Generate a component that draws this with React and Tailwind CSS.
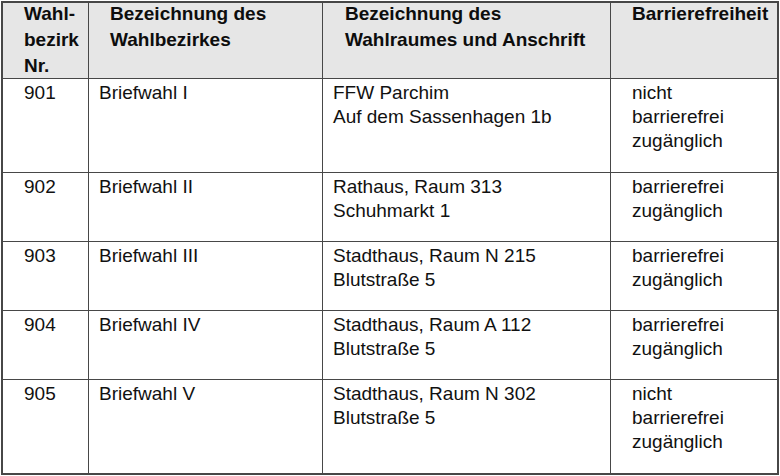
import React from 'react'

const rows = [
  { nr: '901', name: 'Briefwahl I', place: ['FFW Parchim', 'Auf dem Sassenhagen 1b'], access: ['nicht', 'barrierefrei', 'zugänglich'], h: 'h-[93px]' },
  { nr: '902', name: 'Briefwahl II', place: ['Rathaus, Raum 313', 'Schuhmarkt 1'], access: ['barrierefrei', 'zugänglich'], h: 'h-[68px]' },
  { nr: '903', name: 'Briefwahl III', place: ['Stadthaus, Raum N 215', 'Blutstraße 5'], access: ['barrierefrei', 'zugänglich'], h: 'h-[68px]' },
  { nr: '904', name: 'Briefwahl IV', place: ['Stadthaus, Raum A 112', 'Blutstraße 5'], access: ['barrierefrei', 'zugänglich'], h: 'h-[68px]' },
  { nr: '905', name: 'Briefwahl V', place: ['Stadthaus, Raum N 302', 'Blutstraße 5'], access: ['nicht', 'barrierefrei', 'zugänglich'], h: 'h-[93px]' },
]

const Lines = ({ items }) => items.map((t, i) => <div key={i}>{t}</div>)

const App = () => {
  return (
    <div className="w-[780px] h-[476px] bg-white pt-px pl-px font-['Liberation_Sans',Arial,sans-serif] text-[19px] text-[#111]">
      <div className="w-[778px] border-2 border-[#474747] flex flex-col">
        {/* header */}
        <div className="flex h-[76px] bg-[#e6e6e6] border-b border-[#474747] font-bold leading-[26px] text-[#0d0d0d]">
          <div className="w-[86px] border-r border-[#474747] pl-[21px] -mt-[2px]">
            <div>Wahl-</div>
            <div>bezirk</div>
            <div>Nr.</div>
          </div>
          <div className="w-[234px] border-r border-[#474747] pl-[21px] -mt-[2px]">
            <div>Bezeichnung des</div>
            <div>Wahlbezirkes</div>
          </div>
          <div className="w-[288px] border-r border-[#474747] pl-[22px] -mt-[2px]">
            <div>Bezeichnung des</div>
            <div>Wahlraumes und Anschrift</div>
          </div>
          <div className="flex-1 pl-[21px] -mt-[2px]">Barrierefreiheit</div>
        </div>

        {/* rows */}
        {rows.map((r, i) => (
          <div
            key={r.nr}
            className={`flex leading-[24px] ${r.h} ${i < rows.length - 1 ? 'box-content border-b border-[#474747]' : ''}`}
          >
            <div className="w-[86px] border-r border-[#474747] pl-[21px] pt-[2px]">{r.nr}</div>
            <div className="w-[234px] border-r border-[#474747] pl-[10px] pt-[2px]">{r.name}</div>
            <div className="w-[288px] border-r border-[#474747] pl-[10px] pt-[2px]">
              <Lines items={r.place} />
            </div>
            <div className="flex-1 pl-[21px] pt-[2px]">
              <Lines items={r.access} />
            </div>
          </div>
        ))}
      </div>
    </div>
  )
}

export default App
